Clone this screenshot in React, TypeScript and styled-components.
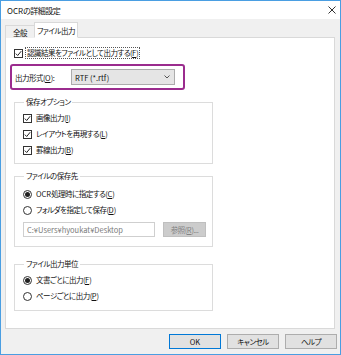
import styled, { createGlobalStyle } from "styled-components";

const Global = createGlobalStyle`
  html, body { margin: 0; padding: 0; background: #ffffff; }
  body {
    font-family: "Noto Sans CJK JP", "Noto Sans", sans-serif;
    font-size: 7.5px;
    font-feature-settings: "palt" 1;
    letter-spacing: -0.5px;
    color: #111;
  }
`;

const Window = styled.div`
  box-sizing: border-box;
  width: 341px;
  height: 355px;
  border: 1px solid #4a9ee2;
  display: flex;
  flex-direction: column;
  background: #f0f0f0;
`;

const TitleBar = styled.div`
  height: 18px;
  background: #fff;
  display: flex;
  align-items: center;
  justify-content: space-between;
  padding: 0 4px 0 6px;
  font-size: 8px;
`;

const Body = styled.div`
  flex: 1;
  display: flex;
  flex-direction: column;
  padding: 3px 5px 0 4px;
`;

const TabRow = styled.div`
  display: flex;
  align-items: flex-end;
  height: 16px;
  margin-bottom: -1px;
  position: relative;
  z-index: 1;
`;

const Tab = styled.div<{ $active?: boolean; $w: number }>`
  box-sizing: border-box;
  width: ${(p) => p.$w}px;
  height: ${(p) => (p.$active ? 16 : 13)}px;
  display: flex;
  align-items: center;
  justify-content: center;
  border: 1px solid #d9d9d9;
  border-bottom: ${(p) => (p.$active ? "1px solid #fff" : "none")};
  border-right: ${(p) => (p.$active ? "1px solid #d9d9d9" : "none")};
  background: ${(p) => (p.$active ? "#fff" : "#f0f0f0")};
`;

const Panel = styled.div`
  box-sizing: border-box;
  height: 292px;
  background: #fff;
  border: 1px solid #d9d9d9;
  padding: 8px 0 0 8px;
  display: flex;
  flex-direction: column;
  align-items: flex-start;
`;

const Row = styled.label<{ $h?: number }>`
  display: flex;
  align-items: center;
  height: ${(p) => p.$h ?? 16}px;
  gap: 2px;
  white-space: nowrap;
`;

const Text = styled.span<{ $focus?: boolean }>`
  padding: 0 1px;
  border: 1px dotted ${(p) => (p.$focus ? "#555" : "transparent")};
  line-height: 10px;
`;

const Key = styled.span`
  text-decoration: underline;
  letter-spacing: 0;
`;

const Latin = styled.span`
  letter-spacing: 0;
`;

const Box = styled.span`
  box-sizing: border-box;
  width: 9px;
  height: 9px;
  border: 1px solid #333;
  background: #fff;
  display: inline-flex;
  align-items: center;
  justify-content: center;
`;

const Radio = styled.span<{ $on?: boolean }>`
  box-sizing: border-box;
  width: 9px;
  height: 9px;
  border: 1px solid #333;
  border-radius: 50%;
  background: #fff;
  display: inline-flex;
  align-items: center;
  justify-content: center;
  &::after {
    content: "";
    width: 5px;
    height: 5px;
    border-radius: 50%;
    background: ${(p) => (p.$on ? "#222" : "transparent")};
  }
`;

const Highlight = styled.div`
  box-sizing: border-box;
  width: 175px;
  height: 26px;
  margin: 4px 0 0 -4px;
  border: 2px solid #9b2c8e;
  border-radius: 3px;
  display: flex;
  align-items: center;
  padding-left: 3px;
`;

const FieldLabel = styled.span`
  width: 56px;
`;

const Select = styled.div`
  box-sizing: border-box;
  width: 104px;
  height: 16px;
  background: #e5e5e5;
  border: 1px solid #acacac;
  display: flex;
  align-items: center;
  justify-content: space-between;
  padding: 0 4px 0 3px;
  letter-spacing: 0;
`;

const Group = styled.fieldset<{ $mt: number; $pt: number; $pb: number }>`
  box-sizing: border-box;
  width: 199px;
  margin: ${(p) => p.$mt}px 0 0 0;
  padding: ${(p) => p.$pt}px 0 ${(p) => p.$pb}px 8px;
  border: 1px solid #dcdcdc;
  min-width: 0;
`;

const Legend = styled.legend`
  padding: 0 2px;
  margin-left: 1px;
  line-height: 10px;
`;

const PathRow = styled.div`
  display: flex;
  gap: 8px;
  margin-top: 4px;
`;

const PathInput = styled.div`
  box-sizing: border-box;
  width: 132px;
  height: 15px;
  border: 1px solid #cfcfcf;
  color: #7a7a7a;
  padding-left: 3px;
  display: flex;
  align-items: center;
  letter-spacing: 0;
`;

const Button = styled.div<{ $primary?: boolean; $disabled?: boolean; $w?: number }>`
  box-sizing: border-box;
  width: ${(p) => p.$w ?? 52}px;
  height: 15px;
  display: flex;
  align-items: center;
  justify-content: center;
  background: ${(p) => (p.$disabled ? "#cccccc" : "#e1e1e1")};
  color: ${(p) => (p.$disabled ? "#838383" : "#111")};
  border: 1px solid ${(p) => (p.$primary ? "#0078d7" : p.$disabled ? "#bfbfbf" : "#adadad")};
`;

const Footer = styled.div`
  display: flex;
  justify-content: flex-end;
  gap: 6px;
  margin: 5px -2px 0 0;
`;

const Check = () => (
  <Box>
    <svg width="7" height="7" viewBox="0 0 7 7">
      <path d="M0.8 3.6 L2.7 5.5 L6.2 1.2" fill="none" stroke="#222" strokeWidth="1" />
    </svg>
  </Box>
);

export default function App() {
  return (
    <>
      <Global />
      <Window>
        <TitleBar>
          <span>
            <Latin>OCR</Latin>の詳細設定
          </span>
          <svg width="8" height="8" viewBox="0 0 8 8">
            <path d="M0.5 0.5 L7.5 7.5 M7.5 0.5 L0.5 7.5" stroke="#333" strokeWidth="1" />
          </svg>
        </TitleBar>
        <Body>
          <TabRow>
            <Tab $w={29}>全般</Tab>
            <Tab $active $w={44}>
              ファイル出力
            </Tab>
          </TabRow>
          <Panel>
            <Row $h={14}>
              <Check />
              <Text $focus>
                認識結果をファイルとして出力する(<Key>F</Key>)
              </Text>
            </Row>
            <Highlight>
              <FieldLabel>
                出力形式(<Key>O</Key>):
              </FieldLabel>
              <Select>
                <span>RTF (*.rtf)</span>
                <svg width="6" height="4" viewBox="0 0 6 4">
                  <path d="M0.5 0.5 L3 3 L5.5 0.5" fill="none" stroke="#555" strokeWidth="1" />
                </svg>
              </Select>
            </Highlight>
            <Group $mt={7} $pt={3} $pb={5}>
              <Legend>保存オプション</Legend>
              <Row>
                <Check />
                <Text>
                  画像出力(<Key>I</Key>)
                </Text>
              </Row>
              <Row>
                <Check />
                <Text>
                  レイアウトを再現する(<Key>L</Key>)
                </Text>
              </Row>
              <Row>
                <Check />
                <Text>
                  罫線出力(<Key>B</Key>)
                </Text>
              </Row>
            </Group>
            <Group $mt={7} $pt={5} $pb={9}>
              <Legend>ファイルの保存先</Legend>
              <Row>
                <Radio $on />
                <Text>
                  <Latin>OCR</Latin>処理時に指定する(<Key>C</Key>)
                </Text>
              </Row>
              <Row>
                <Radio />
                <Text>
                  フォルダを指定して保存(<Key>D</Key>)
                </Text>
              </Row>
              <PathRow>
                <PathInput>C:¥Users¥hyoukat¥Desktop</PathInput>
                <Button $disabled $w={43}>
                  参照(<Key>R</Key>)...
                </Button>
              </PathRow>
            </Group>
            <Group $mt={12} $pt={3} $pb={6}>
              <Legend>ファイル出力単位</Legend>
              <Row>
                <Radio $on />
                <Text>
                  文書ごとに出力(<Key>F</Key>)
                </Text>
              </Row>
              <Row>
                <Radio />
                <Text>
                  ページごとに出力(<Key>P</Key>)
                </Text>
              </Row>
            </Group>
          </Panel>
          <Footer>
            <Button $primary>
              <Latin>OK</Latin>
            </Button>
            <Button>キャンセル</Button>
            <Button>ヘルプ</Button>
          </Footer>
        </Body>
      </Window>
    </>
  );
}
